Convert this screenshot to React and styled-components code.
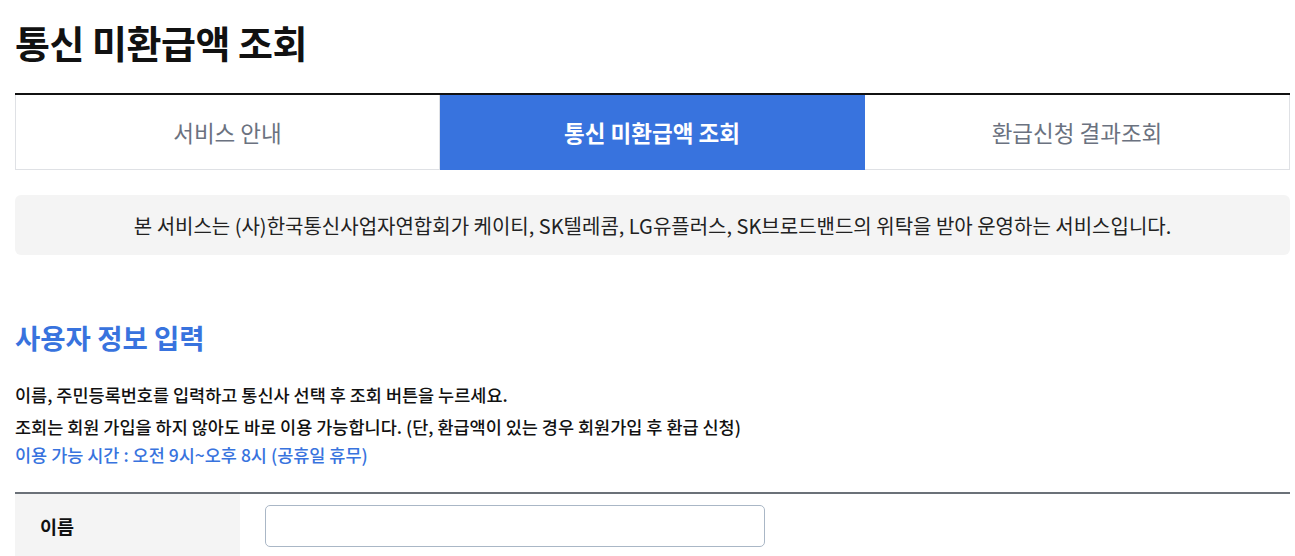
import React, { useState } from "react"
import styled, { createGlobalStyle } from "styled-components"

const tabs = ["서비스 안내", "통신 미환급액 조회", "환급신청 결과조회"]

const App = () => {
  const [active, setActive] = useState(1)
  const [name, setName] = useState("")

  return (
    <Page>
      <GlobalStyle />
      <Title>통신 미환급액 조회</Title>
      <Tabs>
        {tabs.map((t, i) => (
          <Tab key={t} active={i === active} onClick={() => setActive(i)}>
            {t}
          </Tab>
        ))}
      </Tabs>
      <Notice>
        본 서비스는 (사)한국통신사업자연합회가 케이티, SK텔레콤, LG유플러스, SK브로드밴드의 위탁을 받아 운영하는 서비스입니다.
      </Notice>
      <SectionTitle>사용자 정보 입력</SectionTitle>
      <Guide>
        <p>이름, 주민등록번호를 입력하고 통신사 선택 후 조회 버튼을 누르세요.</p>
        <p>조회는 회원 가입을 하지 않아도 바로 이용 가능합니다. (단, 환급액이 있는 경우 회원가입 후 환급 신청)</p>
        <Hours>이용 가능 시간 : 오전 9시~오후 8시 (공휴일 휴무)</Hours>
      </Guide>
      <FormTable>
        <Row>
          <Label>이름</Label>
          <Field>
            <Input value={name} onChange={(e) => setName(e.target.value)} />
          </Field>
        </Row>
      </FormTable>
    </Page>
  )
}

export default App

const GlobalStyle = createGlobalStyle`
  body {
    margin: 0;
    font-family: "Noto Sans CJK KR", "Noto Sans", sans-serif;
    color: #111;
    background: #fff;
  }
`

const Page = styled.div`
  padding: 0 5px 0 15px;
`

const Title = styled.h1`
  margin: 0;
  padding-top: 16px;
  font-size: 38px;
  font-weight: 700;
  line-height: 52px;
  letter-spacing: -0.5px;
  color: #111;
`

const Tabs = styled.div`
  margin-top: 25px;
  display: grid;
  grid-template-columns: repeat(3, 1fr);
  border-top: 2px solid #111;
`

const Tab = styled.button`
  height: 75px;
  border: 1px solid #dfe1e5;
  border-top: none;
  background: ${(p) => (p.active ? "#3873de" : "#fff")};
  color: ${(p) => (p.active ? "#fff" : "#6b7280")};
  font-family: inherit;
  font-size: 22.5px;
  font-weight: ${(p) => (p.active ? 700 : 400)};
  border-color: ${(p) => (p.active ? "#3873de" : "#dfe1e5")};
  cursor: pointer;
  & + & {
    border-left: none;
  }
`

const Notice = styled.div`
  margin-top: 25px;
  height: 60px;
  display: flex;
  align-items: center;
  justify-content: center;
  background: #f4f4f4;
  border-radius: 6px;
  font-size: 20px;
  color: #222;
`

const SectionTitle = styled.h2`
  margin: 62px 0 0;
  font-size: 27.5px;
  font-weight: 700;
  line-height: 40px;
  color: #3873de;
`

const Guide = styled.div`
  margin-top: 22px;
  font-size: 17.5px;
  font-weight: 500;
  line-height: 32px;
  color: #111;
  p {
    margin: 0;
  }
`

const Hours = styled.p`
  color: #3873de;
  line-height: 24px;
`

const FormTable = styled.div`
  margin-top: 25px;
  border-top: 2px solid #6b7178;
`

const Row = styled.div`
  display: grid;
  grid-template-columns: 225px 1fr;
  min-height: 62px;
`

const Label = styled.div`
  background: #f4f4f4;
  display: flex;
  align-items: center;
  padding-left: 25px;
  font-size: 18.5px;
  font-weight: 700;
`

const Field = styled.div`
  display: flex;
  align-items: flex-start;
  padding: 11px 25px;
`

const Input = styled.input`
  width: 500px;
  height: 42px;
  box-sizing: border-box;
  border: 1px solid #aab7c6;
  border-radius: 5px;
  font-family: inherit;
  font-size: 16px;
  padding: 0 12px;
  outline: none;
`
